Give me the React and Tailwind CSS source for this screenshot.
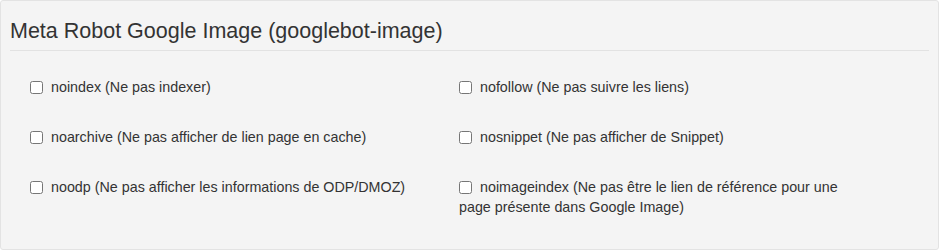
import React from 'react';

const options = [
  { id: 'noindex', label: 'noindex (Ne pas indexer)' },
  { id: 'nofollow', label: 'nofollow (Ne pas suivre les liens)' },
  { id: 'noarchive', label: 'noarchive (Ne pas afficher de lien page en cache)' },
  { id: 'nosnippet', label: 'nosnippet (Ne pas afficher de Snippet)' },
  { id: 'noodp', label: 'noodp (Ne pas afficher les informations de ODP/DMOZ)' },
  { id: 'noimageindex', label: 'noimageindex (Ne pas être le lien de référence pour une page présente dans Google Image)' },
];

const App = () => {
  return (
    <div className="w-[940px] h-[251px] bg-white font-['Liberation_Sans',Arial,sans-serif] text-[#333]">
      <div className="w-[939px] h-[250px] bg-[#f4f4f4] border border-[#e3e3e3] rounded-[3px]">
        <h4 className="pl-[9px] pt-[19px] text-[21.5px] leading-[22px] text-[#333]">
          Meta Robot Google Image (googlebot-image)
        </h4>
        <div className="ml-[9px] mr-[9px] mt-[8px] border-t border-[#e2e2e2]" />

        <div className="grid grid-cols-[410px_400px] gap-x-[19px] pl-[29px] pt-[26px]">
          {options.map((o) => (
            <div key={o.id} className="mb-[30px] text-[14.3px] leading-[20px]">
              <label className="cursor-pointer">
                <input
                  type="checkbox"
                  className="w-[13px] h-[13px] m-0 mr-[8px] align-[-2px] accent-[#555]"
                />
                {o.label}
              </label>
            </div>
          ))}
        </div>
      </div>
    </div>
  );
};

export default App;
